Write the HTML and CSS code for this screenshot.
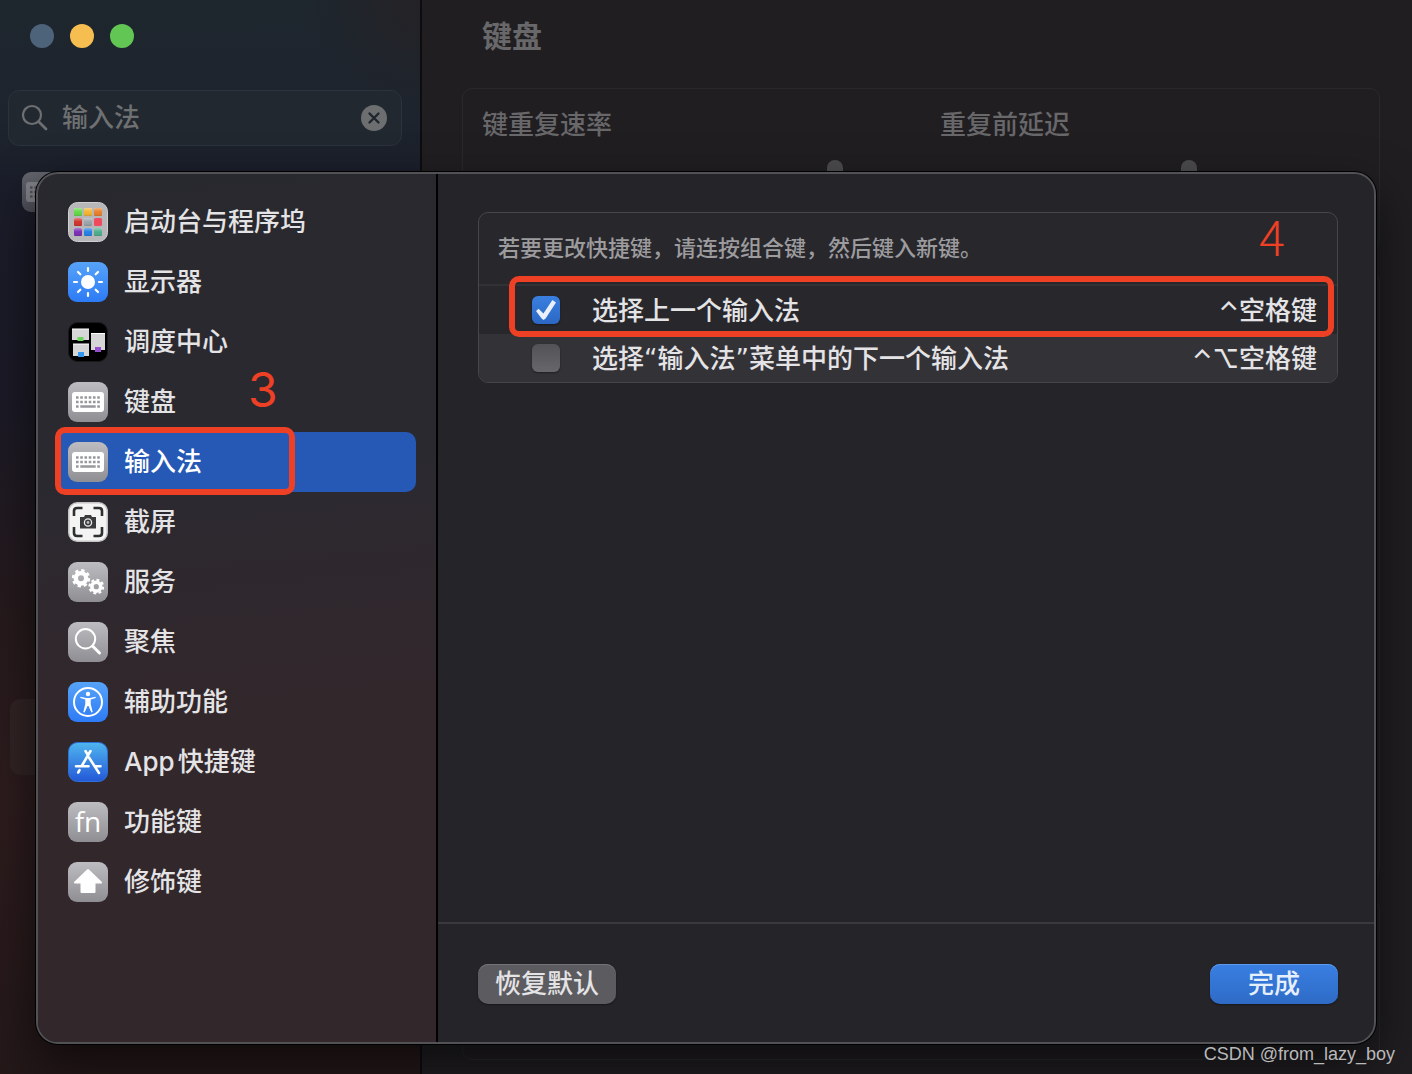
FILE: index.html
```html
<!DOCTYPE html>
<html lang="zh-CN">
<head>
<meta charset="utf-8">
<title>键盘</title>
<link rel="stylesheet" href="styles.css">
</head>
<body>
<svg class="defs" aria-hidden="true">
  <defs>
    <linearGradient id="gray" x1="0" y1="0" x2="0" y2="1"><stop offset="0" stop-color="#bdbcc0"/><stop offset="1" stop-color="#8f8e93"/></linearGradient>
    <linearGradient id="blue" x1="0" y1="0" x2="0" y2="1"><stop offset="0" stop-color="#57a3f8"/><stop offset="1" stop-color="#2d7bf6"/></linearGradient>
    <linearGradient id="store" x1="0" y1="0" x2="0" y2="1"><stop offset="0" stop-color="#4fb5ee"/><stop offset="1" stop-color="#2358d8"/></linearGradient>
    <linearGradient id="shine" x1="0" y1="0" x2="0" y2="1"><stop offset="0" stop-color="#fff" stop-opacity=".4"/><stop offset=".5" stop-color="#fff" stop-opacity="0"/><stop offset="1" stop-color="#000" stop-opacity=".15"/></linearGradient>
    <symbol id="i-keyboard" viewBox="0 0 40 40">
      <rect width="40" height="40" rx="9" fill="url(#gray)"/>
      <rect x="4" y="10" width="32" height="20" rx="3" fill="#fff"/>
      <path d="M8 15.500h24M8 20h24" stroke="#98979c" stroke-width="2.600" stroke-dasharray="2.600 1.640"/>
      <path d="M8 24.500h2.600M12.300 24.500h15.400M29.300 24.500h2.600" stroke="#98979c" stroke-width="2.400"/>
    </symbol>
  </defs>
</svg>

<div class="window">
  <aside class="sidebar">
    <div class="lights"><span class="light close"></span><span class="light min"></span><span class="light max"></span></div>
    <div class="search">
      <svg width="28" height="28" viewBox="0 0 28 28" fill="none" stroke="#6e6f71" stroke-width="2.200" stroke-linecap="round"><circle cx="10" cy="11" r="9"/><path d="M17 18l7 7" stroke-width="2.800"/></svg>
      <input type="text" value="输入法" aria-label="搜索">
      <button class="clear" aria-label="清除"><svg width="26" height="26" viewBox="0 0 26 26"><circle cx="13" cy="13" r="13" fill="#6d6e70"/><path d="M8.500 8.500l9 9m0-9l-9 9" stroke="#20262e" stroke-width="2.400" stroke-linecap="round"/></svg></button>
    </div>
    <svg class="result-icon" width="40" height="40"><use href="#i-keyboard"/></svg>
    <div class="result-row"></div>
  </aside>
  <main class="content">
    <h1>键盘</h1>
    <section class="card sliders">
      <label>键重复速率<input type="range" min="0" max="100" value="100"></label>
      <label>重复前延迟<input type="range" min="0" max="100" value="70"></label>
    </section>
    <section class="card grow"></section>
    <section class="card last"></section>
  </main>
</div>

<div class="sheet" role="dialog" aria-label="键盘快捷键">
  <nav class="nav">
    <a href="#launchpad">
      <svg width="40" height="40" viewBox="0 0 40 40"><rect x=".5" y=".5" width="39" height="39" rx="9" fill="#b7b7ba" stroke="#d0d0d2"/>
        <g><rect x="6" y="6" width="8" height="8" rx="1.500" fill="#62d845"/><rect x="16" y="6" width="8" height="8" rx="1.500" fill="#f3b42e"/><rect x="26" y="6" width="8" height="8" rx="1.500" fill="#e87f28"/>
        <rect x="6" y="16" width="8" height="8" rx="1.500" fill="#d0302a"/><rect x="16" y="16" width="8" height="8" rx="1.500" fill="#9aa3a8"/><rect x="26" y="16" width="8" height="8" rx="1.500" fill="#f04a5e"/>
        <rect x="6" y="26" width="8" height="8" rx="1.500" fill="#7a2cb4"/><rect x="16" y="26" width="8" height="8" rx="1.500" fill="#1f80e6"/><rect x="26" y="26" width="8" height="8" rx="1.500" fill="#4aad8c"/></g>
        <path d="M6 6h8v8H6zM16 6h8v8h-8zM26 6h8v8h-8z" fill="url(#shine)"/><path d="M6 16h8v8H6zM16 16h8v8h-8z" fill="url(#shine)"/><path d="M6 26h8v8H6zM16 26h8v8h-8zM26 26h8v8h-8z" fill="url(#shine)"/></svg>
      启动台与程序坞</a>
    <a href="#display">
      <svg width="40" height="40" viewBox="0 0 40 40"><rect width="40" height="40" rx="9" fill="url(#blue)"/><circle cx="20" cy="20" r="7" fill="#fff"/><path d="M20 6v3M20 31v3M6 20h3M31 20h3M10 10l2.300 2.300M27.700 27.700L30 30M30 10l-2.300 2.300M12.300 27.700L10 30" stroke="#fff" stroke-width="2.200" stroke-linecap="round"/></svg>
      显示器</a>
    <a href="#mission">
      <svg width="40" height="40" viewBox="0 0 40 40"><rect x=".5" y=".5" width="39" height="39" rx="9" fill="#000" stroke="#19191b"/><path d="M4 7h17v11H4zM5 22h16v12H5zM23 11.500h14V28H23z" fill="#d6d6d6"/><path d="M4 7h17M5 22h16M23 11.500h14" stroke="#fff"/><path d="M9.500 15h6v4h-6z" fill="#6bd25a"/><path d="M10 30h6v5h-6z" fill="#3497f0"/><path d="M27 25h6v5h-6z" fill="#9650cf"/></svg>
      调度中心</a>
    <a href="#keyboard"><svg width="40" height="40"><use href="#i-keyboard"/></svg>键盘<span class="step step-three">3</span></a>
    <a href="#input" class="selected" aria-current="page"><svg width="40" height="40"><use href="#i-keyboard"/></svg>输入法<span class="mark mark-nav"></span></a>
    <a href="#screenshot">
      <svg width="40" height="40" viewBox="0 0 40 40"><rect x=".75" y=".75" width="38.500" height="38.500" rx="8.500" fill="#f4f4f4" stroke="#c4c4c6" stroke-width="1.500"/><path d="M6 14V9q0-3 3-3h5.500M25.500 6H31q3 0 3 3v5M34 25v6q0 3-3 3h-5.500M14.500 34H9q-3 0-3-3v-6" fill="none" stroke="#2d2f31" stroke-width="2.600"/><path d="M12 15h4l1-2h6l1 2h4v11.500H12z" fill="#393b3d"/><circle cx="20" cy="20.500" r="3.600" fill="#393b3d" stroke="#eee" stroke-width="1.300"/><circle cx="20" cy="20.500" r="1.400" fill="#bbb"/></svg>
      截屏</a>
    <a href="#services">
      <svg width="40" height="40" viewBox="0 0 40 40"><rect width="40" height="40" rx="9" fill="url(#gray)"/><g fill="none" stroke="#fff"><circle cx="13" cy="16.300" r="5.200" stroke-width="4.400"/><circle cx="13" cy="16.300" r="8" stroke-width="2.400" stroke-dasharray="3.340 2.943"/><circle cx="28.300" cy="24.700" r="4.400" stroke-width="3.600"/><circle cx="28.300" cy="24.700" r="6.800" stroke-width="2.200" stroke-dasharray="2.900 2.440"/></g></svg>
      服务</a>
    <a href="#spotlight">
      <svg width="40" height="40" viewBox="0 0 40 40"><rect width="40" height="40" rx="9" fill="url(#gray)"/><g fill="none" stroke="#fff" stroke-linecap="round"><circle cx="17.500" cy="16.800" r="9.700" stroke-width="2"/><path d="M25 24.500l6.500 6.500" stroke-width="3"/></g></svg>
      聚焦</a>
    <a href="#accessibility">
      <svg width="40" height="40" viewBox="0 0 40 40"><rect width="40" height="40" rx="9" fill="url(#blue)"/><circle cx="20" cy="20" r="14" fill="none" stroke="#fff" stroke-width="2"/><circle cx="20" cy="12" r="2.200" fill="#fff"/><path d="M12.500 14.800l5.500 1.200h4l5.500-1.200.2 1.200-5 1.500v4.500l2 8-1.300.4L20.500 24h-1l-2.900 6.400-1.300-.4 2-8v-4.500l-5-1.500z" fill="#fff"/></svg>
      辅助功能</a>
    <a href="#app">
      <svg width="40" height="40" viewBox="0 0 40 40"><rect x=".5" y=".5" width="39" height="39" rx="9" fill="url(#store)" stroke="#2d70d8"/><g stroke="#fff" stroke-width="2.600" stroke-linecap="round"><path d="M17.500 9l2.300 3.800M22.500 9l-8.800 15M21 15.500L31 31M8 24.200h12.500M27 24.200h5.500M11.500 28.200L10.200 30.500"/></g></svg>
      App快捷键</a>
    <a href="#fn">
      <svg width="40" height="40" viewBox="0 0 40 40"><rect width="40" height="40" rx="9" fill="url(#gray)"/><text x="20" y="30" text-anchor="middle" class="fn">fn</text></svg>
      功能键</a>
    <a href="#modifier">
      <svg width="40" height="40" viewBox="0 0 40 40"><rect width="40" height="40" rx="9" fill="url(#gray)"/><path d="M20 8L33 20.500H26.500V30H13.500V20.500H7z" fill="#fff" stroke="#fff" stroke-width="2" stroke-linejoin="round"/></svg>
      修饰键</a>
  </nav>

  <section class="pane">
    <div class="pane-body">
      <div class="shortcuts">
        <p class="hint">若要更改快捷键，请连按组合键，然后键入新键。<span class="step step-four">4</span></p>
        <div class="row">
          <input type="checkbox" id="prev" checked><label for="prev">选择上一个输入法</label><kbd><span class="mod">⌃</span>空格键</kbd>
          <span class="mark mark-row"></span>
        </div>
        <div class="row alt">
          <input type="checkbox" id="next"><label for="next">选择<span class="quote">“</span>输入法<span class="quote">”</span>菜单中的下一个输入法</label><kbd><span class="mod">⌃⌥</span>空格键</kbd>
        </div>
      </div>
    </div>
    <footer class="actions">
      <button class="btn">恢复默认</button>
      <button class="btn primary">完成</button>
    </footer>
  </section>
</div>
<div class="watermark">CSDN @from_lazy_boy</div>
</body>
</html>
```

FILE: styles.css
```css
* { box-sizing: border-box; }

body {
  margin: 0;
  position: relative;
  min-height: 100vh;
  overflow: hidden;
  background: #201e21;
  color: #e4e3e5;
  font: 500 26px/40px "Inter", "Noto Sans CJK SC", sans-serif;
  text-autospace: normal;
}

button, input { font: inherit; color: inherit; }

.defs { position: absolute; width: 0; height: 0; }

/* Dimmed window behind the sheet */
.window { display: flex; min-height: 100vh; }

.sidebar {
  width: 422px;
  flex: none;
  border-right: 2px solid #0d0d0f;
  background:
    radial-gradient(circle at 100% 0, #242226 0, transparent 110px),
    linear-gradient(#1e262e 0, #1d242d 120px, #1a1c29 200px, #1b1a26 400px, #261a1c 620px, #2d1c1e 800px, #241819 1074px);
}

.lights { display: flex; gap: 16px; padding: 24px 30px 42px; }
.light { width: 24px; height: 24px; border-radius: 50%; }
.close { background: #4d6379; }
.min { background: #f6be50; }
.max { background: #61c654; }

.search {
  display: flex;
  align-items: center;
  height: 56px;
  margin: 0 18px 26px 8px;
  padding: 0 14px 0 13px;
  border: 1px solid #2b323b;
  border-radius: 11px;
  background: #222830;
  color: #6f7072;
}
.search input {
  flex: 1;
  min-width: 0;
  padding: 0 0 0 12px;
  border: 0;
  outline: 0;
  background: none;
}
.clear { display: flex; padding: 0; border: 0; background: none; }

.result-icon { display: block; margin-left: 22px; opacity: .45; }
.result-row { height: 76px; margin: 487px 18px 0 10px; border-radius: 10px; background: #322425; }

.content { flex: 1; display: flex; flex-direction: column; padding: 16px 32px 14px 40px; color: #68676a; }
h1 { margin: 0 0 32px; padding-left: 20px; font-size: 30px; line-height: 40px; }
.card { border: 1px solid #29282b; border-radius: 10px; }
.sliders { display: grid; grid-template-columns: 1fr 1fr; height: 162px; }
.sliders label { display: flex; flex-direction: column; gap: 15px; padding: 16px 19px; }
.sliders input { appearance: none; width: 361px; height: 40px; margin: 0; background: none; }
.sliders input::-webkit-slider-thumb { appearance: none; width: 16px; height: 40px; border-radius: 8px; background: #4c4b4e; }
.grow { flex: 1; margin: 22px 0; }
.last { height: 160px; }

/* Sheet */
.sheet {
  position: absolute;
  inset: 172px 36px 30px;
  display: flex;
  overflow: hidden;
  border: 2px solid #525155;
  border-radius: 22px;
  background: #252429;
  background-clip: padding-box;
  box-shadow: 0 0 0 1px #000, 0 20px 50px rgba(0, 0, 0, .6);
}

.nav {
  width: 400px;
  flex: none;
  padding: 18px 20px 18px 18px;
  border-right: 2px solid #000;
  background: linear-gradient(175deg, #28292e, #2b2930 35%, #32272b 62%, #32272b);
}
.nav a {
  position: relative;
  display: flex;
  align-items: center;
  gap: 16px;
  height: 60px;
  padding: 0 12px;
  border-radius: 10px;
  color: inherit;
  text-decoration: none;
}
.nav a.selected { background: #2659b5; color: #fff; }
.fn { font: 400 28px "Open Sans", sans-serif; fill: #fff; }

.pane { flex: 1; display: flex; flex-direction: column; min-width: 0; }
.pane-body { flex: 1; padding: 38px 36px 38px 40px; }

.shortcuts { border: 1px solid #47464a; border-radius: 10px; background: #28272c; }
.hint {
  position: relative;
  height: 73px;
  margin: 0;
  padding: 15px 19px;
  border-bottom: 2px solid #323136;
  color: #9c9b9e;
  font-size: 22px;
}
.row {
  position: relative;
  display: flex;
  align-items: center;
  height: 48px;
  padding: 0 20px 0 53px;
  font-family: "Noto Sans", "Noto Sans CJK SC", sans-serif;
}
.row.alt { background: #333237; border-radius: 0 0 9px 9px; }
.row label { flex: 1; padding-left: 32px; }
.quote { font-family: "DejaVu Sans", sans-serif; }
kbd { font: inherit; }
.mod { font-family: "Inter", "DejaVu Sans", sans-serif; }

.row input {
  appearance: none;
  display: grid;
  place-items: center;
  width: 28px;
  height: 28px;
  margin: 0;
  border-radius: 6px;
  background: linear-gradient(#535256, #67666a);
  box-shadow: 0 1px 2px rgba(0, 0, 0, .4);
}
.row input:checked { background: linear-gradient(#3a7fe0, #2c68c4); }
.row input:checked::before {
  content: "";
  width: 20px;
  height: 20px;
  background: #e9f0fb;
  clip-path: polygon(0 55%, 13% 44%, 37% 68%, 82% 0, 100% 12%, 48% 93%, 38% 100%, 28% 93%);
}

.actions {
  display: flex;
  justify-content: space-between;
  padding: 40px 36px 38px 40px;
  border-top: 2px solid #3a393d;
}
.btn {
  height: 40px;
  padding: 0 17px;
  border: 0;
  border-radius: 10px;
  background: #5c5b5f;
  box-shadow: inset 0 1px #747377, 0 1px 2px rgba(0, 0, 0, .4);
  line-height: 38px;
}
.primary {
  width: 128px;
  background: linear-gradient(#397fe2, #2e6bc6);
  box-shadow: inset 0 1px #5d9aec, 0 1px 2px rgba(0, 0, 0, .4);
  color: #e6effc;
}

/* Annotations */
.mark { position: absolute; border: 6px solid #ee4024; border-radius: 10px; pointer-events: none; }
.mark-nav { inset: -5px 121px -3px -1px; }
.mark-row { inset: -10px 3px -3px 30px; z-index: 1; }
.step { position: absolute; color: #ee4024; font-size: 48px; line-height: 48px; font-weight: 400; }
.step-three { left: 192px; top: -6px; }
.step-four { right: 52px; top: -2px; font-family: "Noto Sans CJK SC", sans-serif; font-weight: 300; }

.watermark {
  position: absolute;
  right: 17px;
  bottom: 8px;
  color: #b9b9ba;
  font: 18px/24px "Liberation Sans", sans-serif;
}
```
